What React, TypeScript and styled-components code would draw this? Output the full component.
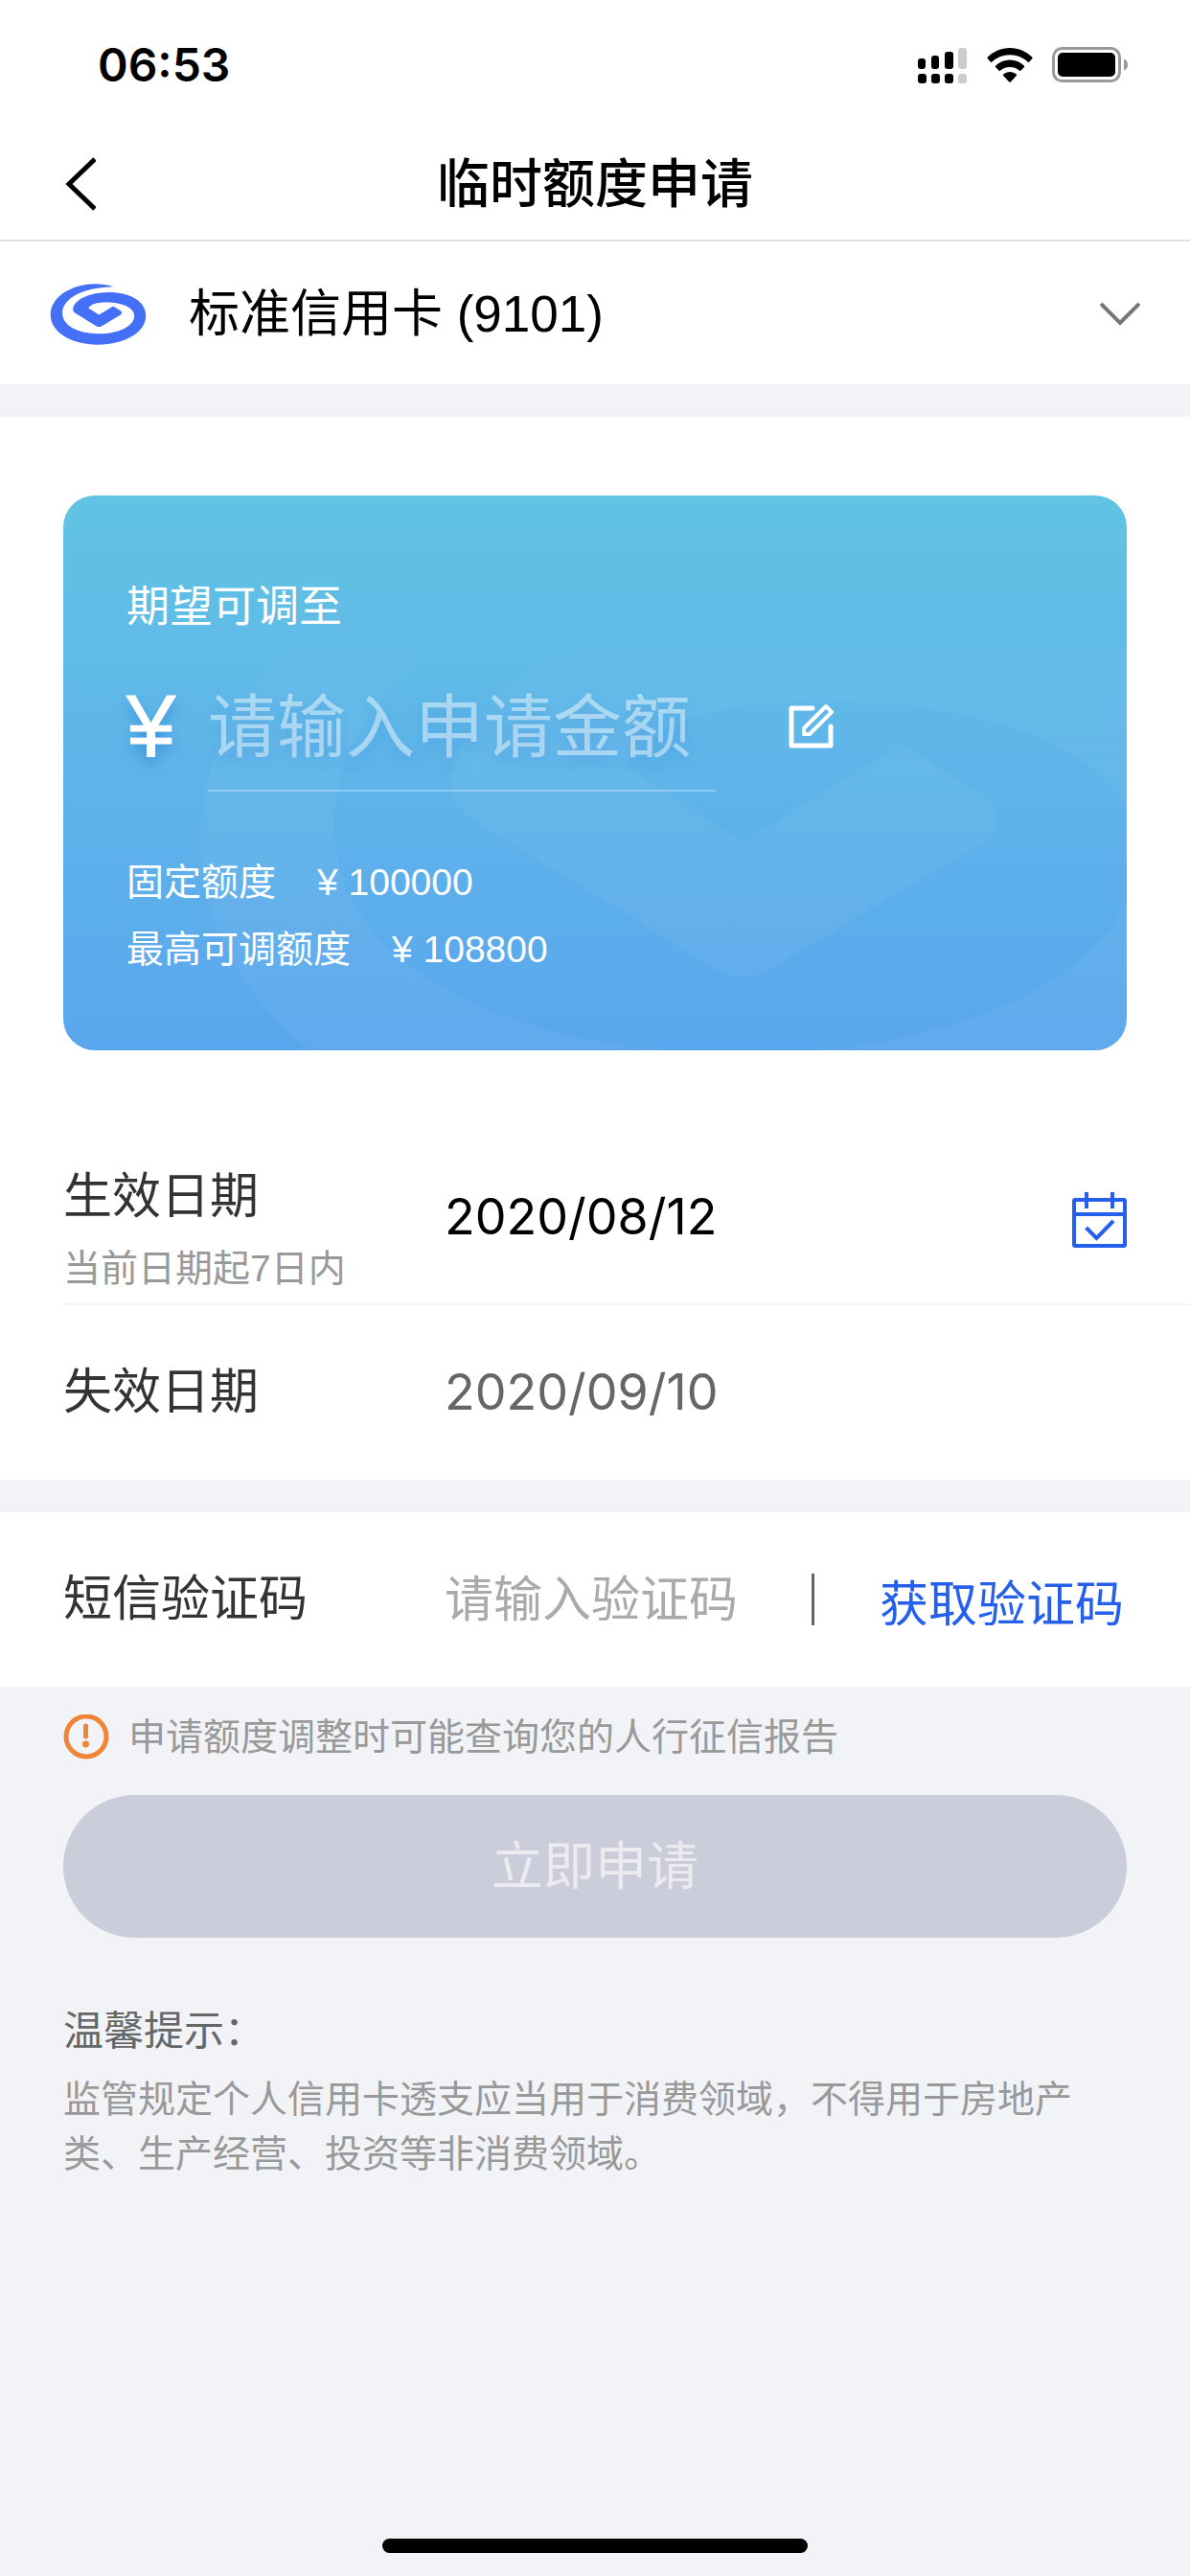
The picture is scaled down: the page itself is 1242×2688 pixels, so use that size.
import React, { useState } from "react";
import styled, { createGlobalStyle } from "styled-components";

const SANS = '"Liberation Sans", "Noto Sans CJK SC", sans-serif';
const DIGITS = 'Inter, "Noto Sans CJK SC", sans-serif';

const GlobalStyle = createGlobalStyle`
  *, *::before, *::after { box-sizing: border-box; }
  body { margin: 0; background: #f2f3f7; color: #000; font-family: ${SANS}; }
  button, input, select { margin: 0; padding: 0; border: 0; background: none; font: inherit; color: inherit; outline: none; }
  button { cursor: pointer; }
  svg { display: block; flex: none; }
  h1, h2, p { margin: 0; }
`;

const Page = styled.div`
  display: flex;
  flex-direction: column;
  min-height: 100vh;
`;

const StatusBar = styled.div`
  display: flex;
  align-items: center;
  justify-content: space-between;
  height: 134px;
  padding: 2px 64px 0 102px;
  background: #fff;
`;

const Clock = styled.time`
  font-family: ${DIGITS};
  font-size: 48px;
  font-weight: 600;
  line-height: 60px;
`;

const StatusIcons = styled.div`
  display: flex;
  align-items: center;
  gap: 20px;
`;

const NavBar = styled.header`
  display: grid;
  grid-template-columns: 120px 1fr 120px;
  align-items: center;
  height: 118px;
  background: #fff;
  border-bottom: 2px solid #e1e1e3;
`;

const BackButton = styled.button`
  display: flex;
  padding: 20px 20px 20px 66px;
`;

const Title = styled.h1`
  font-size: 55px;
  font-weight: 500;
  line-height: 70px;
  text-align: center;
`;

const CardPicker = styled.label`
  display: flex;
  align-items: center;
  gap: 44px;
  height: 149px;
  padding: 2px 52px 0;
  background: #fff;
`;

const CardSelect = styled.select`
  flex: 1;
  min-width: 0;
  appearance: none;
  font-size: 53px;
  line-height: 70px;
`;

const Section = styled.section`
  margin-top: 34px;
  background: #fff;
`;

const CardArea = styled.div`
  padding: 82px 66px 84px;
`;

const LimitCard = styled.div`
  position: relative;
  padding: 85px 66px 70px;
  border-radius: 33px;
  overflow: hidden;
  color: #fff;
  background: linear-gradient(180deg, #61c4e3 0%, #5fb6e9 45%, #5aa6ee 100%);
`;

const Watermark = styled.svg`
  position: absolute;
  top: 0;
  left: 0;
`;

const CardBody = styled.div`
  position: relative;
`;

const CardCaption = styled.label`
  display: block;
  font-size: 45px;
  line-height: 64px;
`;

const AmountRow = styled.div`
  display: flex;
  align-items: center;
  margin: 24px 0 60px;
`;

const Currency = styled.span`
  flex: 0 0 85px;
  font-size: 92px;
  line-height: 136px;
  -webkit-text-stroke: 1px #fff;
  text-shadow: 0 8px 14px rgba(30, 110, 210, 0.55);
`;

const AmountInput = styled.input`
  flex: 0 1 530px;
  min-width: 0;
  height: 136px;
  padding-top: 4px;
  border-bottom: 2px solid rgba(255, 255, 255, 0.3);
  font-size: 72px;
  text-shadow: 0 8px 14px rgba(30, 110, 210, 0.22);
  &::placeholder { color: rgba(255, 255, 255, 0.47); opacity: 1; }
`;

const EditButton = styled.button`
  margin-left: 76px;
`;

const LimitLine = styled.div`
  display: flex;
  gap: 43px;
  font-size: 39px;
  line-height: 70px;
`;

const Row = styled.div<{ $divided?: boolean }>`
  display: flex;
  align-items: center;
  height: 182px;
  margin-left: 66px;
  padding-right: 66px;
  border-bottom: ${(p) => (p.$divided ? "2px solid #f5f5f7" : "0")};
`;

const FieldLabel = styled.label<{ $hinted?: boolean }>`
  flex: 0 0 398px;
  padding-top: ${(p) => (p.$hinted ? 28 : 0)}px;
  color: #333;
  font-size: 51px;
  line-height: 70px;
`;

const Hint = styled.small`
  display: block;
  margin-top: 10px;
  color: #999;
  font-size: 39px;
  line-height: 60px;
`;

const DateInput = styled.input<{ $muted?: boolean }>`
  flex: 1;
  min-width: 0;
  height: 70px;
  padding-bottom: 2px;
  color: ${(p) => (p.$muted ? "#666" : "#000")};
  font-family: ${DIGITS};
  font-size: 52px;
`;

const DateButton = styled.button`
  padding-top: 6px;
`;

const CodeInput = styled.input`
  flex: 1;
  min-width: 0;
  height: 70px;
  font-size: 51px;
  &::placeholder { color: #aaa; opacity: 1; }
`;

const Separator = styled.span`
  width: 3px;
  height: 54px;
  margin-right: 68px;
  background: #666;
`;

const CodeButton = styled.button`
  padding: 12px 3px 0 0;
  color: #2560ec;
  font-size: 51px;
  line-height: 70px;
`;

const Footer = styled.div`
  padding: 23px 66px 0;
`;

const Notice = styled.p`
  display: flex;
  align-items: center;
  gap: 20px;
  color: #999;
  font-size: 39px;
  line-height: 60px;
`;

const SubmitButton = styled.button`
  width: 100%;
  height: 149px;
  margin: 30px 0 68px;
  padding-bottom: 8px;
  border-radius: 75px;
  background: #cccdda;
  color: rgba(255, 255, 255, 0.6);
  font-size: 54px;
`;

const TipsTitle = styled.h2`
  color: #666;
  font-size: 42px;
  font-weight: 400;
  line-height: 60px;
`;

const TipsText = styled.p`
  margin-top: 12px;
  color: #999;
  font-size: 39px;
  line-height: 57px;
`;

const HomeIndicator = styled.div`
  width: 444px;
  height: 15px;
  margin: auto auto 24px;
  border-radius: 8px;
  background: #000;
`;

const SWIRL =
  "M222 40C205 33 185 31 165 31C85 33 27 75 27 127C27 180 90 220 175 220C260 220 324 180 324 130C324 85 275 56 205 57C145 58 97 82 97 112Q97 117 103 121L168 161Q178 168 188 161L245 127Q253 120 245 114L222 100L178 127L145 106C152 94 170 88 200 88C250 88 288 104 288 130C288 162 240 186 178 186C110 186 64 160 64 122C64 75 130 42 222 40Z";

const SignalIcon = () => (
  <svg width="52" height="38" viewBox="0 0 52 38">
    <rect x="0" y="12" width="8" height="11" rx="3" />
    <rect x="14" y="9" width="8" height="14" rx="3" />
    <rect x="28" y="5" width="9" height="18" rx="3" />
    <rect x="42" y="1" width="9" height="22" rx="3" fill="#ccc" />
    <rect x="0" y="28" width="9" height="10" rx="3" />
    <rect x="14" y="28" width="9" height="10" rx="3" />
    <rect x="28" y="28" width="9" height="10" rx="3" />
    <rect x="42" y="28" width="9" height="10" rx="3" fill="#ccc" />
  </svg>
);

const WifiIcon = () => (
  <svg width="48" height="36" viewBox="0 0 48 36">
    <path d="M24 0C33 0 41 3.600 47.200 9.600Q48 10.500 47.200 11.300L43.500 15.200C38 10 31.500 7.200 24 7.200S10 10 4.500 15.200L.8 11.300Q0 10.500 .8 9.600C7 3.600 15 0 24 0Z" />
    <path d="M24 12.500C29.600 12.500 34.800 14.700 38.800 18.500Q39.600 19.300 38.800 20.200L34.800 24.300C31.900 21.500 28.200 20 24 20S16.100 21.500 13.200 24.300L9.200 20.200Q8.400 19.300 9.200 18.500C13.200 14.700 18.400 12.500 24 12.500Z" />
    <path d="M24 25C26.600 25 29 26 30.800 27.600Q31.500 28.300 30.800 29L24.800 35.500Q24 36.200 23.200 35.500L17.200 29Q16.500 28.300 17.200 27.600C19 26 21.400 25 24 25Z" />
  </svg>
);

const BatteryIcon = () => (
  <svg width="80" height="38" viewBox="0 0 80 38">
    <rect x="1.500" y="1.500" width="69" height="34" rx="9" fill="none" stroke="#999" strokeWidth="3" />
    <rect x="6" y="6" width="60" height="25" rx="5" />
    <path d="M75 12.500C77.500 13.500 79 15.800 79 18.500S77.500 23.500 75 24.500Z" fill="#999" />
  </svg>
);

const BackIcon = () => (
  <svg width="34" height="56" viewBox="0 0 34 56" fill="none" stroke="#000" strokeWidth="5">
    <path d="M33 2L6 28L33 54" />
  </svg>
);

const ChevronIcon = () => (
  <svg width="42" height="26" viewBox="0 0 42 26" fill="none" stroke="#777" strokeWidth="4">
    <path d="M1 2L21 22L41 2" />
  </svg>
);

const BankLogo = () => (
  <svg width="101" height="64" viewBox="26 30 299 191">
    <path d={SWIRL} fill="#446ff7" />
  </svg>
);

const EditIcon = () => (
  <svg width="48" height="48" viewBox="0 0 48 48" fill="none" stroke="#fff" strokeWidth="5" strokeLinecap="round" strokeLinejoin="round">
    <path d="M25 5H3V44H44V24" />
    <path d="M16 32V26L39 3L45 9L22 32Z" strokeWidth="4" />
  </svg>
);

const CalendarIcon = () => (
  <svg width="57" height="58" viewBox="0 0 57 58" fill="none" stroke="#2560ec" strokeWidth="4">
    <rect x="2" y="8" width="53" height="48" rx="1" />
    <path d="M2 23H55M15 0V17M42 0V17" />
    <path d="M14.500 37L25.500 48L43 30" />
  </svg>
);

const InfoIcon = () => (
  <svg width="48" height="48" viewBox="0 0 48 48">
    <circle cx="24" cy="23" r="21" fill="none" stroke="#f08537" strokeWidth="5" />
    <path d="M23.500 12V23" stroke="#f08537" strokeWidth="5" strokeLinecap="round" />
    <circle cx="23.500" cy="31" r="3.500" fill="#f08537" />
  </svg>
);

const LIMITS = [
  { name: "固定额度", value: "100000" },
  { name: "最高可调额度", value: "108800" },
];

export default function App() {
  const [amount, setAmount] = useState("");
  const [code, setCode] = useState("");

  return (
    <Page>
      <GlobalStyle />
      <StatusBar>
        <Clock>06:53</Clock>
        <StatusIcons>
          <SignalIcon />
          <WifiIcon />
          <BatteryIcon />
        </StatusIcons>
      </StatusBar>

      <NavBar>
        <BackButton type="button" aria-label="返回">
          <BackIcon />
        </BackButton>
        <Title>临时额度申请</Title>
      </NavBar>

      <CardPicker>
        <BankLogo />
        <CardSelect aria-label="信用卡">
          <option>标准信用卡 (9101)</option>
        </CardSelect>
        <ChevronIcon />
      </CardPicker>

      <Section>
        <CardArea>
          <LimitCard>
            <Watermark width="1110" height="579" viewBox="0 0 1110 579" aria-hidden="true">
              <defs>
                <linearGradient id="fade" x1="0" y1="0" x2="0" y2="579" gradientUnits="userSpaceOnUse">
                  <stop offset="0.15" stopColor="#fff" stopOpacity="0" />
                  <stop offset="0.5" stopColor="#fff" stopOpacity="0.045" />
                </linearGradient>
                <mask id="fadeMask">
                  <rect width="1110" height="579" fill="url(#fade)" />
                </mask>
              </defs>
              <g mask="url(#fadeMask)">
                <path d={SWIRL} fill="#fff" transform="translate(42 -115) scale(3.75)" />
              </g>
            </Watermark>
            <CardBody>
              <CardCaption htmlFor="amount">期望可调至</CardCaption>
              <AmountRow>
                <Currency>¥</Currency>
                <AmountInput
                  id="amount"
                  inputMode="numeric"
                  placeholder="请输入申请金额"
                  value={amount}
                  onChange={(e) => setAmount(e.target.value)}
                />
                <EditButton type="button" aria-label="编辑金额">
                  <EditIcon />
                </EditButton>
              </AmountRow>
              {LIMITS.map((limit) => (
                <LimitLine key={limit.name}>
                  <span>{limit.name}</span>
                  <span>¥ {limit.value}</span>
                </LimitLine>
              ))}
            </CardBody>
          </LimitCard>
        </CardArea>

        <Row $divided>
          <FieldLabel htmlFor="start" $hinted>
            生效日期
            <Hint>当前日期起7日内</Hint>
          </FieldLabel>
          <DateInput id="start" readOnly value="2020/08/12" />
          <DateButton type="button" aria-label="选择日期">
            <CalendarIcon />
          </DateButton>
        </Row>
        <Row>
          <FieldLabel htmlFor="end">失效日期</FieldLabel>
          <DateInput id="end" readOnly $muted value="2020/09/10" />
        </Row>
      </Section>

      <Section>
        <Row>
          <FieldLabel htmlFor="code">短信验证码</FieldLabel>
          <CodeInput
            id="code"
            inputMode="numeric"
            placeholder="请输入验证码"
            value={code}
            onChange={(e) => setCode(e.target.value)}
          />
          <Separator />
          <CodeButton type="button">获取验证码</CodeButton>
        </Row>
      </Section>

      <Footer>
        <Notice>
          <InfoIcon />
          申请额度调整时可能查询您的人行征信报告
        </Notice>
        <SubmitButton type="submit">立即申请</SubmitButton>
        <TipsTitle>温馨提示：</TipsTitle>
        <TipsText>
          监管规定个人信用卡透支应当用于消费领域，不得用于房地产类、生产经营、投资等非消费领域。
        </TipsText>
      </Footer>

      <HomeIndicator />
    </Page>
  );
}
